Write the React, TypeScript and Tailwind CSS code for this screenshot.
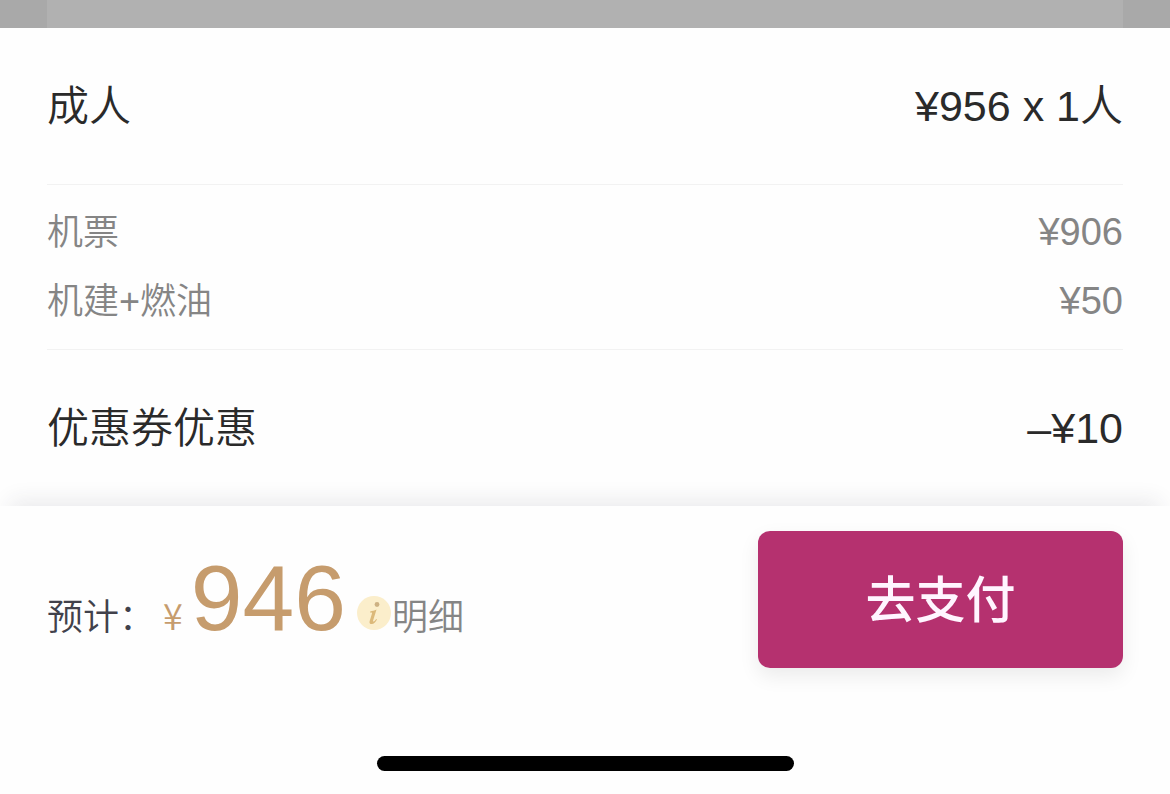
type FareLine = {
  label: string;
  amount: string;
};

const fareLines: FareLine[] = [
  { label: "机票", amount: "¥906" },
  { label: "机建+燃油", amount: "¥50" }
];

function SummaryRow({ label, amount }: FareLine) {
  return (
    <div className="flex items-baseline justify-between pt-12 pb-[47px] leading-[60px] text-[#2a2a2a]">
      <dt className="text-[42px] font-[350]">{label}</dt>
      <dd className="text-[43px] font-[350]">{amount}</dd>
    </div>
  );
}

function InfoIcon() {
  return (
    <svg viewBox="0 0 34 34" className="size-[34px]" aria-hidden="true">
      <circle cx="17" cy="17" r="17" fill="#fbeecb" />
      <circle cx="20" cy="8.5" r="2.4" fill="#cdb183" />
      <path
        d="M13.2 15.4c2.3-.2 4.2-.9 6.3-1.8l-3.3 10.6c-.3 1-.1 1.4.4 1.3.9-.2 1.7-1.3 2.5-2.6l.9.6c-1.4 2.7-3.1 4.6-5.3 4.6-1.9 0-2.6-1.3-2-3.2l2.3-7.4c.2-.8-.1-1.1-.9-1.1h-1.1z"
        fill="#dcb979"
      />
    </svg>
  );
}

export default function App() {
  return (
    <main className="flex min-h-screen flex-col bg-[#fefefe] font-['Liberation_Sans','Noto_Sans_CJK_SC',sans-serif]">
      {/* dimmed page behind the sheet */}
      <div className="h-7 bg-[#a9a9a9] px-[47px]">
        <div className="h-full bg-[#b1b1b1]" />
      </div>

      <dl className="px-[47px]">
        <SummaryRow label="成人" amount="¥956 x 1人" />
        <div className="border-y border-[#f2f2f2] py-[13px]">
          {fareLines.map((line) => (
            <div
              key={line.label}
              className="flex items-baseline justify-between leading-[68px] text-[#858585]"
            >
              <dt className="text-[36px] font-[350]">{line.label}</dt>
              <dd className="text-[38px]">{line.amount}</dd>
            </div>
          ))}
        </div>
        <SummaryRow label="优惠券优惠" amount="–¥10" />
      </dl>

      <footer className="flex flex-1 flex-col justify-between bg-[#fefefe] shadow-[0_-16px_20px_-10px_rgba(40,40,70,0.09)]">
        <div className="flex items-center justify-between px-[47px] pt-[25px]">
          <div className="flex items-baseline pb-1 text-[36px] font-[350]">
            <span className="text-[#41414b]">预计：</span>
            <span className="ml-2 font-['Noto_Sans_CJK_SC',sans-serif] text-[#c69c6d]">¥</span>
            <strong className="ml-2 text-[93px] leading-[100px] font-normal text-[#c69c6d]">946</strong>
            <button type="button" className="ml-[11px] flex cursor-pointer items-baseline gap-px text-[#858585]">
              <InfoIcon />
              明细
            </button>
          </div>
          <button
            type="button"
            className="h-[137px] w-[365px] cursor-pointer rounded-xl bg-[#b5316f] pt-1 text-[50px] font-medium text-[#fff5ff] shadow-[0_8px_20px_rgba(0,0,0,0.08)]"
          >
            去支付
          </button>
        </div>
        <div className="mx-auto mb-[23px] h-[15px] w-[417px] rounded-full bg-black" />
      </footer>
    </main>
  );
}
